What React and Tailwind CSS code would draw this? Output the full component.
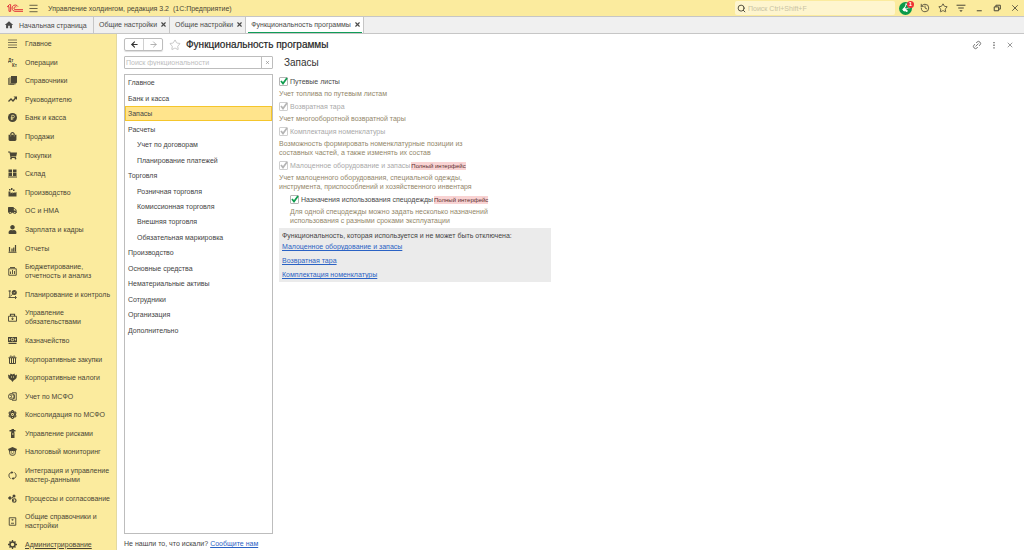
import React from 'react';
import clsx from 'clsx';
import { ArrowLeft, ArrowRight, History, Link2, Menu, Search, Star, X } from 'lucide-react';
import { FaAtom, FaBullhorn, FaShoppingBag, FaShoppingCart, FaTruck, FaUser } from 'react-icons/fa';
import { MdHome } from 'react-icons/md';

const Svg = ({ children, className = 'size-[9px]' }) => (
  <svg viewBox="0 0 18 18" fill="none" stroke="currentColor" strokeWidth="1.8" className={className}>
    {children}
  </svg>
);

const Lines = () => (
  <Svg>
    <path d="M0 2h18M0 7h18M0 12h18M0 17h18" strokeWidth="1.4" />
  </Svg>
);

const Entries = () => (
  <Svg>
    <g fill="currentColor" stroke="none" fontSize="9" fontWeight="700" fontFamily="Liberation Sans, sans-serif">
      <text x="0" y="8">Дт</text>
      <text x="8" y="17">Кт</text>
    </g>
  </Svg>
);

const Books = () => (
  <Svg>
    <path d="M6 0h12v13l-2 2H6z" fill="currentColor" stroke="none" />
    <path d="M4 2.500V16h11" />
    <path d="M1.500 4v13.500H12" />
  </Svg>
);

const Trend = () => (
  <Svg>
    <path d="M1 13l5-5 4 4 6-7" strokeWidth="2.6" />
    <path d="M11 3h7v7z" fill="currentColor" stroke="none" />
  </Svg>
);

const Coin = () => (
  <Svg>
    <circle cx="9" cy="9" r="9" fill="currentColor" stroke="none" />
    <path d="M7.5 14V4.5h2.8a2.4 2.4 0 0 1 0 5H5.5M5.5 12h5" stroke="#fbeb9e" strokeWidth="1.5" />
  </Svg>
);

const Warehouse = () => (
  <Svg>
    <path d="M1 1h7v6H1zM10 1h7v6h-7zM1 8h7v6H1zM10 8h7v6h-7zM0 15h18v2H0z" fill="currentColor" stroke="none" />
  </Svg>
);

const Factory = () => (
  <Svg>
    <path d="M1 17V7h4v4l4-3v3l4-3v2l4-2v9zM2 2h3v3H2zM6 0h3v4H6zM10 3h3v3h-3z" fill="currentColor" stroke="none" />
  </Svg>
);

const Bars = () => (
  <Svg>
    <path d="M1 16.5h16M3 15V6M8 15V9M11.5 15V7M15 15V2" strokeWidth="2.4" />
  </Svg>
);

const Budget = () => (
  <Svg>
    <path d="M1.5 3.5h15v13h-15zM4 1h10M5 14V9M9 14V6M13 14V8" />
  </Svg>
);

const Planning = () => (
  <Svg>
    <path d="M1 2h5M3.500 1v14M1 15h15M14 12l3 3-3 3M5 12l4-3" />
    <circle cx="12.5" cy="5" r="5" fill="currentColor" stroke="none" />
    <path d="m10.500 5 1.5 1.5 2.5-3" stroke="#fbeb9e" strokeWidth="1.2" />
  </Svg>
);

const Case = () => (
  <Svg>
    <path d="M1 6.500h16v10H1zM8 10h2v3H8z" />
    <path d="M5 6V2.500h8V6" strokeWidth="2.4" />
  </Svg>
);

const Treasury = () => (
  <Svg>
    <path d="M0 2h18v10H0zM1 13.5h16V16H1z" fill="currentColor" stroke="none" />
    <circle cx="9" cy="7" r="2.6" stroke="#fbeb9e" />
    <path d="M3 5v4M15 5v4" stroke="#fbeb9e" />
  </Svg>
);

const Present = () => (
  <Svg>
    <path d="M1 5.500h16M3 6v11h12V6M7 6v11M11 6v11" strokeWidth="2" />
    <path d="M9 5C7 0 3 1 5 5M9 5c2-5 6-4 4 0" />
  </Svg>
);

const Eagle = () => (
  <Svg>
    <path d="M0 3l4 2 1-4 4 2 4-2 1 4 4-2-1 7-3 3-2 1-3 4-3-4-2-1-3-3z" fill="currentColor" stroke="none" />
    <path d="M7 6v4M11 6v4" stroke="#fbeb9e" strokeWidth="1" />
  </Svg>
);

const Ledger = () => (
  <Svg>
    <path d="M8 1.5h8.500v15H8" />
    <circle cx="7" cy="9" r="6" strokeWidth="2" />
    <path d="M9 6H5l2 3-2 3h4M12 5v9" />
  </Svg>
);

const Risk = () => (
  <Svg>
    <path d="M7 0h5v2h3v3h-3l1 3v10H6V8l1-3H3V2h4zM8 9v2h3V9z" fill="currentColor" stroke="none" />
  </Svg>
);

const Inspector = () => (
  <Svg>
    <path d="M0 4l9-4 9 4-2 4H2z" fill="currentColor" stroke="none" />
    <path d="M3 8v3a6 6 0 0 0 12 0V8M5 10h3M10 10h3M7 13.500h4" />
  </Svg>
);

const Sync = () => (
  <Svg>
    <path d="M8 3C1 3 0 11 5 15M10 15c7 0 8-8 3-12" strokeWidth="2" />
    <path d="M7 0v6l4-3zM11 12v6l-4-3z" fill="currentColor" stroke="none" />
  </Svg>
);

const Process = () => (
  <Svg>
    <path d="M0 8h8M4 4v8M8 8l4-4M8 9l4 5" />
    <circle cx="12" cy="4" r="3" fill="currentColor" stroke="none" />
    <circle cx="12.500" cy="13" r="3.500" strokeWidth="2.4" />
    <circle cx="3.500" cy="8" r="2.500" fill="currentColor" stroke="none" />
  </Svg>
);

const Handbook = () => (
  <Svg>
    <path d="M2.500 1.500h13v15h-13zM7 5.500h4M9 5v2M6 12.500h6" />
  </Svg>
);

const Gear = () => (
  <Svg>
    <circle cx="9" cy="9" r="5" strokeWidth="3" />
    <path d="M9 0v4M9 14v4M0 9h4M14 9h4M3 3l2 2M13 13l2 2M3 15l2-2M13 5l2-2" strokeWidth="2.6" />
  </Svg>
);

const Logo = () => (
  <svg viewBox="0 0 48 28" className="h-[10px] w-4 shrink-0" fill="none" stroke="#e0343c" strokeWidth="3">
    <path d="M1 10l6-6h4v20H6V10H1" />
    <path d="M33 10a9.500 9.500 0 1 0-9 14h24" />
    <path d="M28 11a4.500 4.500 0 1 0-4 8h24" />
  </svg>
);

const ICON = 'size-[9px]';

const sections = [
  { label: ['Главное'], icon: <Lines /> },
  { label: ['Операции'], icon: <Entries /> },
  { label: ['Справочники'], icon: <Books /> },
  { label: ['Руководителю'], icon: <Trend /> },
  { label: ['Банк и касса'], icon: <Coin /> },
  { label: ['Продажи'], icon: <FaShoppingBag className={ICON} /> },
  { label: ['Покупки'], icon: <FaShoppingCart className={ICON} /> },
  { label: ['Склад'], icon: <Warehouse /> },
  { label: ['Производство'], icon: <Factory /> },
  { label: ['ОС и НМА'], icon: <FaTruck className={ICON} /> },
  { label: ['Зарплата и кадры'], icon: <FaUser className={ICON} /> },
  { label: ['Отчеты'], icon: <Bars /> },
  { label: ['Бюджетирование,', 'отчетность и анализ'], icon: <Budget /> },
  { label: ['Планирование и контроль'], icon: <Planning /> },
  { label: ['Управление', 'обязательствами'], icon: <Case /> },
  { label: ['Казначейство'], icon: <Treasury /> },
  { label: ['Корпоративные закупки'], icon: <Present /> },
  { label: ['Корпоративные налоги'], icon: <Eagle /> },
  { label: ['Учет по МСФО'], icon: <Ledger /> },
  { label: ['Консолидация по МСФО'], icon: <FaAtom className={ICON} /> },
  { label: ['Управление рисками'], icon: <Risk /> },
  { label: ['Налоговый мониторинг'], icon: <Inspector /> },
  { label: ['Интеграция и управление', 'мастер-данными'], icon: <Sync /> },
  { label: ['Процессы и согласование'], icon: <Process /> },
  { label: ['Общие справочники и', 'настройки'], icon: <Handbook /> },
  { label: ['Администрирование'], icon: <Gear />, active: true },
];

const tree = [
  { label: 'Главное' },
  { label: 'Банк и касса' },
  { label: 'Запасы', selected: true },
  { label: 'Расчеты' },
  { label: 'Учет по договорам', child: true },
  { label: 'Планирование платежей', child: true },
  { label: 'Торговля' },
  { label: 'Розничная торговля', child: true },
  { label: 'Комиссионная торговля', child: true },
  { label: 'Внешняя торговля', child: true },
  { label: 'Обязательная маркировка', child: true },
  { label: 'Производство' },
  { label: 'Основные средства' },
  { label: 'Нематериальные активы' },
  { label: 'Сотрудники' },
  { label: 'Организация' },
  { label: 'Дополнительно' },
];

const options = [
  { id: 'waybills', label: 'Путевые листы', hint: ['Учет топлива по путевым листам'] },
  { id: 'tare', label: 'Возвратная тара', hint: ['Учет многооборотной возвратной тары'], disabled: true },
  {
    id: 'kits',
    label: 'Комплектация номенклатуры',
    hint: ['Возможность формировать номенклатурные позиции из', 'составных частей, а также изменять их состав'],
    disabled: true,
  },
  {
    id: 'equipment',
    label: 'Малоценное оборудование и запасы',
    hint: ['Учет малоценного оборудования, специальной одежды,', 'инструмента, приспособлений и хозяйственного инвентаря'],
    disabled: true,
    full: true,
  },
  {
    id: 'workwear',
    label: 'Назначения использования спецодежды',
    hint: ['Для одной спецодежды можно задать несколько назначений', 'использования с разными сроками эксплуатации'],
    full: true,
    nested: true,
  },
];

const locked = ['Малоценное оборудование и запасы', 'Возвратная тара', 'Комплектация номенклатуры'];

const TitleBar = () => (
  <header className="flex h-4 items-center bg-[#fbeb9e] pl-[7px] pr-1 text-[#4a4636]">
    <Logo />
    <button aria-label="Меню" className="ml-[5px]"><Menu size={11} strokeWidth={1.8} /></button>
    <span className="ml-[9px] whitespace-pre">Управление холдингом, редакция 3.2  (1С:Предприятие)</span>
    <label className="ml-auto flex h-[14px] w-40 items-center gap-[2px] rounded-[2px] bg-[#fef5ce] px-[2px]">
      <Search size={9} strokeWidth={2.5} className="shrink-0" />
      <input aria-label="Поиск" placeholder="Поиск Ctrl+Shift+F" className="w-full bg-transparent outline-none placeholder:text-[#c9c3a4]" />
    </label>
    <div className="ml-1 flex items-center gap-2">
      <button aria-label="Уведомления" className="relative flex size-[13px] items-center justify-center rounded-full bg-[#0a9a4a] text-white">
        <FaBullhorn size={8} className="-rotate-45" />
        <span className="absolute -right-[2px] -top-[1px] flex size-[7px] items-center justify-center rounded-full bg-[#ed2f35] text-[6px] font-bold">1</span>
      </button>
      <button aria-label="История"><History size={10} /></button>
      <button aria-label="Избранное"><Star size={10} /></button>
      <button aria-label="Настройки окна">
        <Svg className="size-[10px]"><path d="M1 4h16M4 9h10" /><path d="M6 13h6l-3 3z" fill="currentColor" stroke="none" /></Svg>
      </button>
      <button aria-label="Свернуть"><Svg className="size-[10px]"><path d="M5 14h9" /></Svg></button>
      <button aria-label="Развернуть"><Svg className="size-[10px]"><path d="M4 7h8v7H4zM7 7V4h8v7h-3" /></Svg></button>
      <button aria-label="Закрыть"><X size={10} /></button>
    </div>
  </header>
);

const Tab = ({ children, active }) => (
  <div className={clsx('flex items-center border-r border-[#c6c6c6] pl-[2px] pr-px', active && 'bg-white')}>
    <div className={clsx('flex h-[15px] items-center gap-[2px] border-b pl-[3px]', active ? 'border-[#0f9d58]' : 'border-transparent')}>
      <button>{children}</button>
      <button aria-label="Закрыть вкладку" className="px-px"><X size={7} strokeWidth={4} /></button>
    </div>
  </div>
);

const Tabs = () => (
  <div className="flex h-[18px] border-y border-[#c6c6c6] bg-[#f0f0f0] text-[#4a4a4a]">
    <button className="flex w-[94px] items-center gap-[5px] border-r border-[#c6c6c6] pl-1">
      <MdHome size={10} />
      Начальная страница
    </button>
    <Tab>Общие настройки</Tab>
    <Tab>Общие настройки</Tab>
    <Tab active>Функциональность программы</Tab>
  </div>
);

const Sidebar = () => (
  <nav className="flex w-[117px] shrink-0 flex-col justify-between border-r border-[#e3d9a0] bg-[#fbeb9e] pb-px pl-2 pt-[5px] text-[#4a4636]">
    {sections.map(({ label, icon, active }) => (
      <a key={label[0]} href="#" className="flex items-center gap-2">
        {icon}
        <span className={clsx(active && 'underline')}>
          {label.map(line => <span key={line} className="block whitespace-nowrap">{line}</span>)}
        </span>
      </a>
    ))}
  </nav>
);

const Heading = () => (
  <div className="flex h-[13px] items-center">
    <div className="flex h-[13px] w-[39px] rounded-[2px] border border-[#bdbdbd] shadow-[0_1px_1px_#dddddd]">
      <button aria-label="Назад" className="flex flex-1 items-center justify-center border-r border-[#d0d0d0] text-[#333]"><ArrowLeft size={9} strokeWidth={3} /></button>
      <button aria-label="Вперед" className="flex flex-1 items-center justify-center text-[#999]"><ArrowRight size={9} /></button>
    </div>
    <button aria-label="В избранное" className="ml-[6px] text-[#b5b5b5]"><Star size={12} strokeWidth={1.5} /></button>
    <h1 className="ml-[5px] text-[10px] leading-3 text-[#1f1f1f] [-webkit-text-stroke:0.2px]">Функциональность программы</h1>
    <div className="ml-auto flex items-center gap-2 pr-[6px] text-[#666]">
      <button aria-label="Ссылка"><Link2 size={10} className="-rotate-45" /></button>
      <button aria-label="Еще"><Svg className="size-2"><path d="M9 2v3M9 8v3M9 14v3" strokeWidth="3" /></Svg></button>
      <button aria-label="Закрыть"><X size={8} /></button>
    </div>
  </div>
);

const SectionTree = () => (
  <div className="flex w-[149px] shrink-0 flex-col">
    <div className="flex h-[13px] rounded-[1px] border border-[#bdbdbd]">
      <input aria-label="Поиск функциональности" placeholder="Поиск функциональности" className="min-w-0 flex-1 px-px outline-none placeholder:text-[#bdbdbd]" />
      <button aria-label="Очистить" className="flex w-[11px] items-center justify-center border-l border-[#bdbdbd] text-[#888]"><X size={5} strokeWidth={3} /></button>
    </div>
    <div className="mt-[5px] flex-1 border border-[#bdbdbd]">
      <ul className="grid h-[263px] auto-rows-fr">
        {tree.map(({ label, child, selected }) => (
          <li key={label} className="flex">
            <button
              className={clsx(
                'flex w-full items-center border text-left',
                child ? 'pl-[11px]' : 'pl-[2px]',
                selected ? 'border-[#f5c62c] bg-[#ffe48c]' : 'border-transparent',
              )}
            >
              {label}
            </button>
          </li>
        ))}
      </ul>
    </div>
    <p className="pb-[2px] pt-[5px] whitespace-nowrap">
      Не нашли то, что искали?
      <a href="#" className="ml-[2px] text-[#2a62c4] underline">Сообщите нам</a>
    </p>
  </div>
);

const Option = ({ id, label, hint, disabled, full, nested }) => (
  <div className={clsx(nested && 'pl-[11px]')}>
    <div className="flex h-[11px] items-center">
      <span className="grid size-[9px]">
        <input
          id={id}
          type="checkbox"
          defaultChecked
          disabled={disabled}
          className="peer col-start-1 row-start-1 size-[9px] appearance-none rounded-[1px] border border-[#b5b5b5] bg-white disabled:border-[#cfcfcf]"
        />
        <svg
          viewBox="0 0 18 18"
          fill="none"
          stroke="currentColor"
          strokeWidth="3.500"
          className="pointer-events-none invisible col-start-1 row-start-1 size-[9px] overflow-visible text-[#0f9d4f] peer-checked:visible peer-disabled:text-[#b5b5b5]"
        >
          <path d="M4 8l4 5 8-11" />
        </svg>
      </span>
      <label htmlFor={id} className={clsx('ml-[2px]', disabled ? 'text-[#a9a9a9]' : 'text-[#4a4a4a]')}>{label}</label>
      {full && <span className="ml-px bg-[#f9d3d3] text-[6px] leading-2 text-[#5a2f2f]">Полный интерфейс</span>}
    </div>
    <p className="mt-[2px] text-[#93876b]">
      {hint.map(line => <span key={line} className="block">{line}</span>)}
    </p>
  </div>
);

const Content = () => (
  <section className="min-w-0 flex-1">
    <h2 className="pl-[5px] text-[10px] leading-[13px] text-[#333]">Запасы</h2>
    <div className="mt-[7px] flex flex-col gap-[3px]">
      {options.map(option => <Option key={option.id} {...option} />)}
    </div>
    <div className="mt-[3px] w-[272px] bg-[#ebebeb] px-[3px] pb-[3px] pt-[3px]">
      <p>Функциональность, которая используется и не может быть отключена:</p>
      <ul className="mt-[2px] flex flex-col gap-[5px]">
        {locked.map(name => (
          <li key={name}><a href="#" className="text-[#2a62c4] underline">{name}</a></li>
        ))}
      </ul>
    </div>
  </section>
);

export default function App() {
  return (
    <div className="flex min-h-screen flex-col bg-white font-['Liberation_Sans',Arial,sans-serif] text-[7px] leading-[9px] text-[#444] [&_svg]:shrink-0">
      <TitleBar />
      <Tabs />
      <div className="flex flex-1">
        <Sidebar />
        <main className="flex min-w-0 flex-1 flex-col pl-[7px] pr-1 pt-1">
          <Heading />
          <div className="mt-[5px] flex flex-1 gap-[6px]">
            <SectionTree />
            <Content />
          </div>
        </main>
      </div>
    </div>
  );
}
